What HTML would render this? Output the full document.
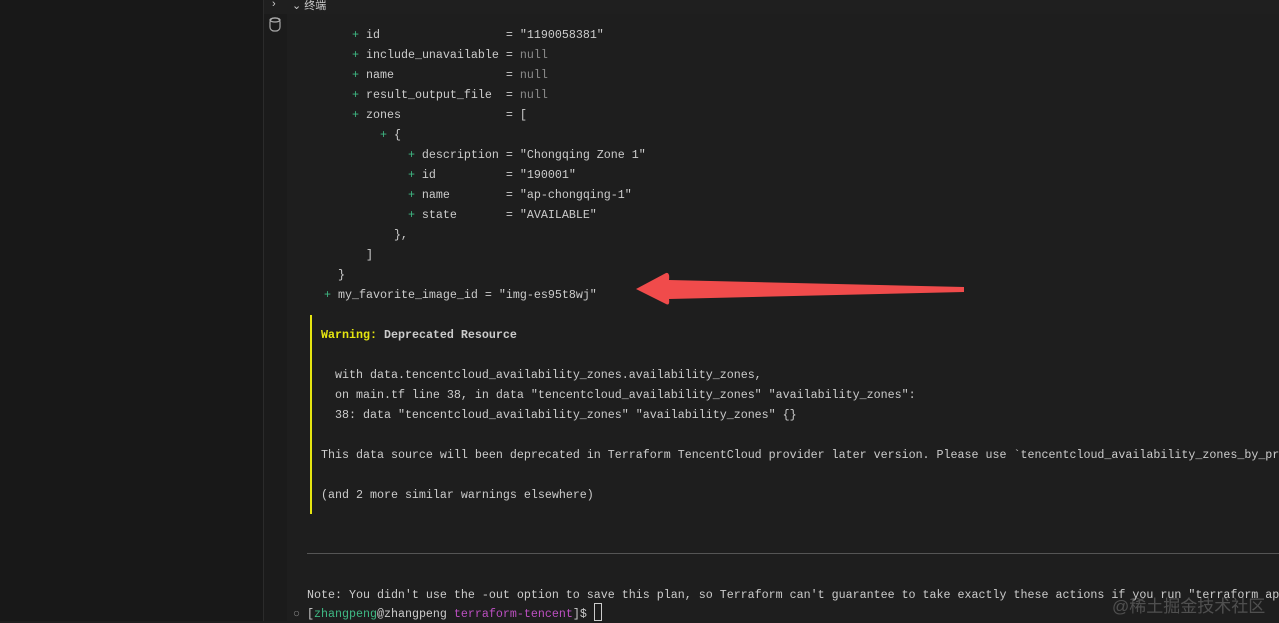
<!DOCTYPE html>
<html><head><meta charset="utf-8"><style>
body{margin:0;width:1279px;height:621px;background:#1e1e1e;overflow:hidden;position:relative;font-family:"Liberation Mono",monospace;}
#left{position:absolute;left:0;top:0;width:263px;height:621px;background:#181818;border-right:1px solid #2b2b2b;}
#side{position:absolute;left:264px;top:14px;width:23px;height:607px;background:#1b1b1b;}
#hdr{position:absolute;left:264px;top:0;width:1015px;height:14px;background:#1f1f1f;color:#ccc;font:11px "Liberation Sans","Noto Sans CJK SC",sans-serif;}
pre{position:absolute;margin:0;left:310px;top:25px;font-size:11.67px;line-height:20px;color:#cccccc;white-space:pre;}
.g{color:#3fb984}.n{color:#8a8a8a}.y{color:#e5e510;font-weight:bold}.b{font-weight:bold}.p{color:#bc4fc1}
#bar{position:absolute;left:310px;top:315px;width:2px;height:199px;background:#e5e510;}
#hr{position:absolute;left:307px;top:553px;width:972px;height:1px;background:#555;}
</style></head><body>
<div id="left"></div>
<div id="hdr"><span style="position:absolute;left:8px;top:-2px">›</span><span style="position:absolute;left:28px;top:-3px">⌄ 终端</span></div>
<div id="side"><svg width="23" height="30"><rect x="6" y="4" width="10" height="13" rx="4" fill="none" stroke="#aaa" stroke-width="1.2"/><ellipse cx="11" cy="6" rx="5" ry="2" fill="none" stroke="#aaa" stroke-width="1.2"/></svg></div>
<pre>      <span class="g">+</span> id                  = "1190058381"
      <span class="g">+</span> include_unavailable = <span class="n">null</span>
      <span class="g">+</span> name                = <span class="n">null</span>
      <span class="g">+</span> result_output_file  = <span class="n">null</span>
      <span class="g">+</span> zones               = [
          <span class="g">+</span> {
              <span class="g">+</span> description = "Chongqing Zone 1"
              <span class="g">+</span> id          = "190001"
              <span class="g">+</span> name        = "ap-chongqing-1"
              <span class="g">+</span> state       = "AVAILABLE"
            },
        ]
    }
  <span class="g">+</span> my_favorite_image_id = "img-es95t8wj"</pre>
<pre style="left:321px;top:325px"><span class="y">Warning:</span> <span class="b">Deprecated Resource</span>

  with data.tencentcloud_availability_zones.availability_zones,
  on main.tf line 38, in data "tencentcloud_availability_zones" "availability_zones":
  38: data "tencentcloud_availability_zones" "availability_zones" {}

This data source will been deprecated in Terraform TencentCloud provider later version. Please use `tencentcloud_availability_zones_by_pr

(and 2 more similar warnings elsewhere)</pre>
<pre style="left:307px;top:585px">Note: You didn't use the -out option to save this plan, so Terraform can't guarantee to take exactly these actions if you run "terraform ap</pre>
<pre style="left:293px;top:603px;line-height:20px"><span style="color:#888">○</span> [<span class="g">zhangpeng</span>@zhangpeng <span class="p">terraform-tencent</span>]$ <span style="display:inline-block;width:6px;height:16px;border:1px solid #ccc;vertical-align:-4px"></span></pre>
<div id="bar"></div>
<div id="hr"></div>
<svg style="position:absolute;left:0;top:0" width="1279" height="621"><path d="M636 289 L666 273 Q670 272 669 280 L964 287 L964 292 L669 299 Q670 306 666 304 Z" fill="#f04b4b"/></svg>
<div style="position:absolute;left:1112px;top:592px;color:rgba(255,255,255,0.22);font:17px 'Liberation Sans','Noto Sans CJK SC',sans-serif">@稀土掘金技术社区</div>
</body></html>
